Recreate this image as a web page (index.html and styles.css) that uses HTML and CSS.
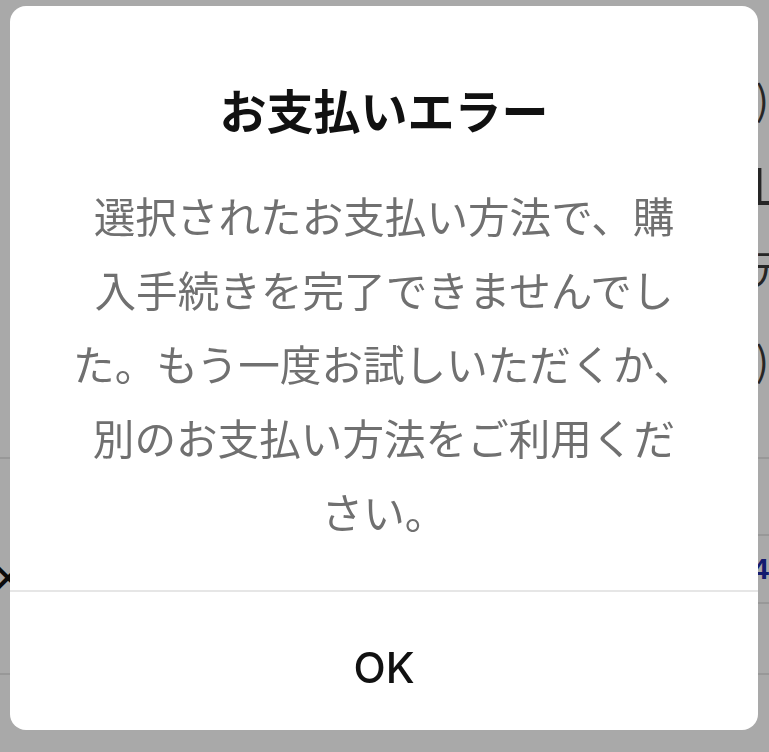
FILE: index.html
```html
<!DOCTYPE html>
<html lang="ja">
<head>
  <meta charset="UTF-8">
  <title>お支払いエラー</title>
  <meta name="viewport" content="width=device-width, initial-scale=1.0">
  <link rel="stylesheet" href="styles.css">
</head>
<body>

  <!-- Page behind the dialog (only its right edge peeks out) -->
  <div class="page">
    <div class="page-line row-1"><span>込)</span></div>
    <div class="page-line row-2"><span>L</span></div>
    <div class="page-line row-3"><span>元</span></div>
    <div class="page-line row-4"><span>込)</span></div>

    <div class="page-section">
      <div class="page-box">
        <span class="page-mark">×</span>
        <span class="page-badge">4</span>
      </div>
    </div>
    <div class="page-section end"></div>
  </div>

  <div class="backdrop"></div>

  <!-- Error dialog -->
  <div class="dialog" role="alertdialog" aria-labelledby="dialog-title">
    <div class="dialog-body">
      <h2 id="dialog-title" class="dialog-title">お支払いエラー</h2>
      <p class="dialog-message">
        選択されたお支払い方法で、購<br>
        入手続きを完了できませんでし<br>
        た。もう一度お試しいただくか、<br>
        別のお支払い方法をご利用くだ<br>
        さい。
      </p>
    </div>
    <button class="dialog-button" type="button">OK</button>
  </div>

</body>
</html>
```

FILE: styles.css
```css
body {
  margin: 0;
  background: #fff;
  font-family: "Noto Sans CJK JP", "Noto Sans", sans-serif;
  overflow: hidden;
  height: 752px;
}

/* Background page */
.page {
  color: #3a3a3a;
}

.page-line {
  display: flex;
  justify-content: flex-end;
  font-size: 40px;
  line-height: 40px;
  white-space: nowrap;
}

.row-1 { margin-top: 78px; }

.row-2 {
  margin-top: 40px;
  margin-right: -10px;
  font-size: 50px;
  line-height: 50px;
}

.row-3 {
  margin-top: 39px;
  margin-right: -23px;
}

.row-4 { margin-top: 52px; }

.page-section {
  margin-top: 78px;
  border-top: 2px solid #e6e6e6;
  padding-top: 75px;
}

.page-section.end {
  margin-top: 0;
  padding-top: 0;
}

.page-box {
  display: flex;
  justify-content: space-between;
  align-items: center;
  height: 66px;
  margin-left: 40px;
  margin-bottom: 69px;
  border-top: 2px solid #e6e6e6;
  border-bottom: 2px solid #e6e6e6;
}

.page-mark {
  margin-left: -52px;
  margin-top: 14px;
  font-size: 40px;
  font-weight: bold;
  color: #111;
}

.page-badge {
  font-family: "Liberation Sans", sans-serif;
  font-weight: bold;
  font-size: 30px;
  color: #1f2aa8;
}

.backdrop {
  position: fixed;
  inset: 0;
  background: rgba(0, 0, 0, 0.337);
}

/* Dialog */
.dialog {
  position: fixed;
  top: 6px;
  left: 10px;
  width: 748px;
  height: 724px;
  display: flex;
  flex-direction: column;
  background: #fff;
  border-radius: 16px;
  overflow: hidden;
}

.dialog-body {
  padding: 75px 0 42px;
  border-bottom: 2px solid #e6e6e6;
  text-align: center;
}

.dialog-title {
  margin: 0;
  font-size: 47px;
  line-height: 56px;
  font-weight: 600;
  color: #111;
}

.dialog-message {
  margin: 41px 0 0;
  font-size: 41.6px;
  line-height: 74px;
  color: #707070;
  white-space: nowrap;
}

.dialog-button {
  flex: 1;
  display: block;
  width: 100%;
  margin: 0;
  padding: 52px 0 38px;
  background: none;
  border: none;
  font-family: Inter, "Liberation Sans", sans-serif;
  font-weight: 500;
  font-size: 42px;
  line-height: 48px;
  color: #111;
  text-align: center;
}
```
